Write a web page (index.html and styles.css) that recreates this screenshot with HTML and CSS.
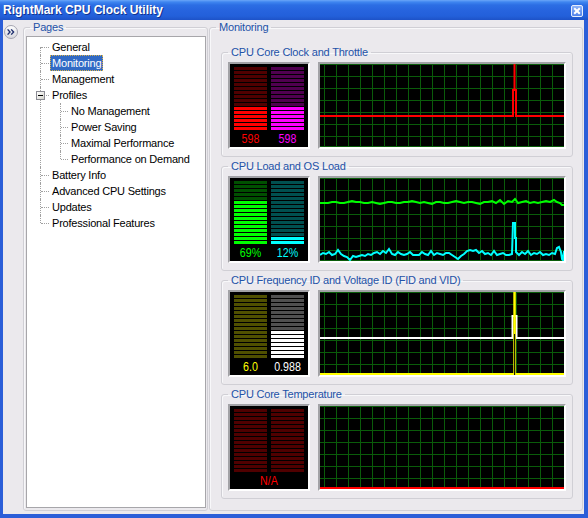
FILE: index.html
```html
<!DOCTYPE html>
<html lang="en">

<head>
    <meta charset="UTF-8">
    <title>RightMark CPU Clock Utility</title>
    <link rel="stylesheet" href="styles.css">
</head>

<body>
    <div class="window">
        <div class="titlebar">
            <span class="title">RightMark CPU Clock Utility</span>
            <svg class="close" width="12" height="12" viewBox="0 0 12 12">
                <defs>
                    <linearGradient id="cg" x1="0" y1="0" x2="0" y2="1">
                        <stop offset="0" stop-color="#8fb4f8" />
                        <stop offset="1" stop-color="#4d80ea" />
                    </linearGradient>
                </defs>
                <rect x="0.5" y="0.5" width="11" height="11" rx="1.5" fill="url(#cg)" stroke="#e6eefc" />
                <path d="M3.2 3.2 L8.8 8.8 M8.8 3.2 L3.2 8.8" stroke="#fff" stroke-width="2" />
            </svg>
        </div>
        <div class="client">
            <svg class="pager" width="14" height="14" viewBox="0 0 14 14">
                <defs>
                    <linearGradient id="pg" x1="0" y1="0" x2="0" y2="1">
                        <stop offset="0" stop-color="#ffffff" />
                        <stop offset="1" stop-color="#d6d6dc" />
                    </linearGradient>
                </defs>
                <circle cx="7" cy="7" r="6.5" fill="url(#pg)" stroke="#a4a4b0" />
                <path d="M3.6 4.4 L6 7 L3.6 9.6 M7.2 4.4 L9.6 7 L7.2 9.6" stroke="#1f2f70" stroke-width="1.4" fill="none" />
            </svg>

            <fieldset class="box pages">
                <legend>Pages</legend>
                <div class="treebox">
                    <ul class="tree">
                        <li><span>General</span></li>
                        <li><span class="sel">Monitoring</span></li>
                        <li><span>Management</span></li>
                        <li><i class="toggle"></i><span>Profiles</span>
                            <ul>
                                <li><span>No Management</span></li>
                                <li><span>Power Saving</span></li>
                                <li><span>Maximal Performance</span></li>
                                <li><span>Performance on Demand</span></li>
                            </ul>
                        </li>
                        <li><span>Battery Info</span></li>
                        <li><span>Advanced CPU Settings</span></li>
                        <li><span>Updates</span></li>
                        <li><span>Professional Features</span></li>
                    </ul>
                </div>
            </fieldset>

            <fieldset class="box monitoring">
                <legend>Monitoring</legend>

                <fieldset class="box group">
                    <legend>CPU Core Clock and Throttle</legend>
                    <div class="row">
                        <div class="meter">
                            <div class="bars">
                                <div class="col red" style="--lit: 6"><div class="lit"></div></div>
                                <div class="col magenta" style="--lit: 6"><div class="lit"></div></div>
                            </div>
                            <div class="vals">
                                <span class="t-red">598</span>
                                <span class="t-magenta">598</span>
                            </div>
                        </div>
                        <div class="graph">
                            <svg width="244" height="83" viewBox="0 0 244 83">
                                <polyline points="0,52 193,52 193,26 194.5,26 194.5,0 194.5,26 196,26 196,52 244,52" fill="none" stroke="#ff0000" stroke-width="2" />
                            </svg>
                        </div>
                    </div>
                </fieldset>

                <fieldset class="box group">
                    <legend>CPU Load and OS Load</legend>
                    <div class="row">
                        <div class="meter">
                            <div class="bars">
                                <div class="col green" style="--lit: 11"><div class="lit"></div></div>
                                <div class="col cyan" style="--lit: 2"><div class="lit"></div></div>
                            </div>
                            <div class="vals">
                                <span class="t-green">69%</span>
                                <span class="t-cyan">12%</span>
                            </div>
                        </div>
                        <div class="graph">
                            <svg width="244" height="83" viewBox="0 0 244 83">
                                <polyline points="0,25 4,25 8,25 12,24 16,24 20,25 24,25 28,24 32,23 36,24 40,24 44,25 48,25 52,24 56,25 60,26 64,25 68,24 72,24 76,25 80,25 84,24 88,24 92,23 96,24 100,25 104,24 108,25 112,26 116,24 120,24 124,25 128,25 132,24 136,23 140,24 144,25 148,24 152,24 156,25 160,26 164,24 168,24 172,23 176,25 180,22 184,26 188,23 192,24 195,21 198,25 202,24 206,23 210,25 214,24 218,25 222,24 226,23 230,24 234,22 237,24 240,25 242,27 244,27" fill="none" stroke="#00ff00" stroke-width="2" />
                                <polyline points="0,77 3,75 6,76 9,74 12,77 15,76 18,72 21,76 24,78 27,79 30,82 33,78 36,79 39,78 42,77 45,78 48,76 51,77 54,75 57,74 60,76 63,73 66,75 69,71 72,76 75,77 78,74 81,76 84,77 87,76 90,74 93,77 96,77 99,77 102,74 105,76 108,77 111,73 114,77 117,75 120,76 123,77 126,75 129,75 132,77 135,79 138,81 141,78 144,76 147,73 150,72 153,73 156,72 159,75 162,73 165,76 168,75 171,77 174,73 177,77 180,76 183,75 186,77 189,77 192,76 193,45 195,45 195,60 196,60 196,74 199,77 202,74 205,76 208,73 211,77 214,75 217,76 220,74 223,77 226,76 229,77 232,75 235,76 237,70 239,69 241,74 242,81 243,82 244,73" fill="none" stroke="#00ffff" stroke-width="2" />
                            </svg>
                        </div>
                    </div>
                </fieldset>

                <fieldset class="box group">
                    <legend>CPU Frequency ID and Voltage ID (FID and VID)</legend>
                    <div class="row">
                        <div class="meter">
                            <div class="bars">
                                <div class="col yellow" style="--lit: 0"><div class="lit"></div></div>
                                <div class="col white" style="--lit: 7"><div class="lit"></div></div>
                            </div>
                            <div class="vals">
                                <span class="t-yellow">6.0</span>
                                <span class="t-white">0.988</span>
                            </div>
                        </div>
                        <div class="graph">
                            <svg width="244" height="83" viewBox="0 0 244 83">
                                <polyline points="0,46 192.5,46 192.5,24 196.5,24 196.5,46 244,46" fill="none" stroke="#ffffff" stroke-width="2" />
                                <rect x="0" y="81" width="244" height="2" fill="#ffff00" />
                                <rect x="193.3" y="0" width="2.5" height="83" fill="#ffff00" />
                                <rect x="194.1" y="42" width="1" height="41" fill="#000" />
                            </svg>
                        </div>
                    </div>
                </fieldset>

                <fieldset class="box group">
                    <legend>CPU Core Temperature</legend>
                    <div class="row">
                        <div class="meter">
                            <div class="bars">
                                <div class="col red" style="--lit: 0"><div class="lit"></div></div>
                                <div class="col red" style="--lit: 0"><div class="lit"></div></div>
                            </div>
                            <div class="vals">
                                <span class="t-red wide">N/A</span>
                            </div>
                        </div>
                        <div class="graph">
                            <svg width="244" height="83" viewBox="0 0 244 83">
                                <rect x="0" y="81" width="244" height="2" fill="#ff0000" />
                            </svg>
                        </div>
                    </div>
                </fieldset>
            </fieldset>
        </div>
    </div>
</body>

</html>
```

FILE: styles.css
```css
html,
body {
    margin: 0;
    padding: 0;
}

body {
    font-family: "Liberation Sans", Arial, sans-serif;
    font-size: 11px;
    letter-spacing: -0.2px;
    color: #000;
}

.window {
    width: 588px;
    height: 518px;
    display: flex;
    flex-direction: column;
}

/* title bar */

.titlebar {
    height: 20px;
    flex: none;
    display: flex;
    justify-content: space-between;
    align-items: flex-start;
    padding: 0 5px 0 3px;
    background: linear-gradient(to bottom, #6aa6f8 0, #3f86f0 2px, #2c6ee4 5px, #2663de 11px, #2360da 16px, #1d52c8 20px);
}

.title {
    color: #fff;
    font-weight: bold;
    font-size: 12px;
    letter-spacing: 0;
    line-height: 20px;
    text-shadow: 1px 1px 0 #12338f;
}

.close {
    margin-top: 5px;
}

/* client area */

.client {
    flex: 1;
    display: flex;
    align-items: flex-start;
    background-color: #ebe9ed;
    border: solid #2b5ed8;
    border-width: 0 4px 4px 3px;
}

.pager {
    flex: none;
    margin: 5px 0 0 1px;
}

.box {
    margin: 0;
    padding: 0;
    min-width: 0;
    box-sizing: border-box;
    border: 1px solid #d0cfd5;
    border-radius: 3px;
    box-shadow: inset 1px 1px 0 #f8f8fa;
}

.box legend {
    color: #2352a8;
    line-height: 14px;
    padding: 0 3px;
    margin-left: 6px;
}

.pages {
    width: 185px;
    height: 491px;
    margin-left: 5px;
}

.monitoring {
    width: 374px;
    height: 491px;
    margin-left: 1px;
}

/* tree */

.treebox {
    height: 472px;
    box-sizing: border-box;
    margin: 2px 0 0 2px;
    width: 180px;
    background-color: #fff;
    border: 1px solid #a7a6aa;
}

.tree,
.tree ul {
    list-style: none;
    margin: 0;
    padding: 0;
}

.tree {
    padding-top: 2px;
}

.tree li {
    position: relative;
    padding-left: 23px;
}

.tree li::before {
    content: "";
    position: absolute;
    left: 13px;
    top: 0;
    bottom: 0;
    border-left: 1px dotted #a0a0a0;
}

.tree li::after {
    content: "";
    position: absolute;
    left: 14px;
    top: 8px;
    width: 8px;
    border-top: 1px dotted #a0a0a0;
}

.tree > li:first-child::before {
    top: 8px;
}

.tree li:last-child::before {
    bottom: auto;
    height: 8px;
}

.tree ul li {
    padding-left: 19px;
}

.tree ul li::before {
    left: 10px;
}

.tree ul li::after {
    left: 11px;
    width: 7px;
}

.tree span {
    display: block;
    width: fit-content;
    line-height: 14px;
    padding: 0 1px;
    border: 1px dotted transparent;
    white-space: nowrap;
}

.tree .sel {
    background-color: #316ac5;
    color: #fff;
    border-color: #d9b24a;
}

.toggle {
    position: absolute;
    z-index: 1;
    left: 9px;
    top: 4px;
    width: 9px;
    height: 9px;
    box-sizing: border-box;
    border: 1px solid #8c8c94;
    background: linear-gradient(135deg, #ffffff, #d4d4cc);
}

.toggle::after {
    content: "";
    position: absolute;
    left: 1px;
    top: 3px;
    width: 5px;
    height: 1px;
    background-color: #000;
}

/* monitoring groups */

.group {
    width: 352px;
    height: 112px;
    margin: 2px 0 0 11px;
    padding: 0 6px;
}

.group legend {
    margin-left: 0;
}

.group:first-of-type {
    margin-top: 11px;
}

.row {
    display: flex;
    gap: 8px;
    margin-top: 3px;
}

.meter,
.graph {
    height: 87px;
    box-sizing: border-box;
    border: 2px solid;
    border-color: #a2a2a6 #fff #fff #a2a2a6;
    background-color: #000;
}

.meter {
    width: 82px;
}

.graph {
    width: 248px;
    background-image: linear-gradient(to right, #0a5c0a 1px, transparent 1px),
        linear-gradient(to bottom, #0a5c0a 1px, transparent 1px);
    background-size: 12px 12px;
    background-position: 4px 0, 0 0;
    box-shadow: inset 0 -1px 0 #0a5c0a;
}

.graph svg {
    display: block;
}

.bars {
    display: flex;
    gap: 4px;
    padding: 3px 4px 0;
}

.col {
    width: 33px;
    height: 63px;
    display: flex;
    flex-direction: column;
    justify-content: flex-end;
    background: repeating-linear-gradient(to bottom, var(--off) 0 3px, transparent 3px 4px);
}

.lit {
    height: calc(var(--lit) * 4px - 1px);
    background: repeating-linear-gradient(to bottom, var(--on) 0 3px, transparent 3px 4px);
}

.red {
    --off: #500000;
    --on: #ff0000;
}

.magenta {
    --off: #500050;
    --on: #ff00ff;
}

.green {
    --off: #005000;
    --on: #00ff00;
}

.cyan {
    --off: #005050;
    --on: #00ffff;
}

.yellow {
    --off: #505000;
    --on: #ffff00;
}

.white {
    --off: #505050;
    --on: #ffffff;
}

.vals {
    display: flex;
    gap: 4px;
    padding: 0 4px;
    height: 17px;
    align-items: center;
    font-family: "Liberation Sans", Arial, sans-serif;
    font-size: 13px;
    letter-spacing: 0;
}

.vals span {
    width: 33px;
    text-align: center;
    transform: scaleX(0.82);
}

.vals .wide {
    width: 100%;
}

.t-red {
    color: #ff0000;
}

.t-magenta {
    color: #ff00ff;
}

.t-green {
    color: #00ff00;
}

.t-cyan {
    color: #00ffff;
}

.t-yellow {
    color: #ffff00;
}

.t-white {
    color: #ffffff;
}
```
